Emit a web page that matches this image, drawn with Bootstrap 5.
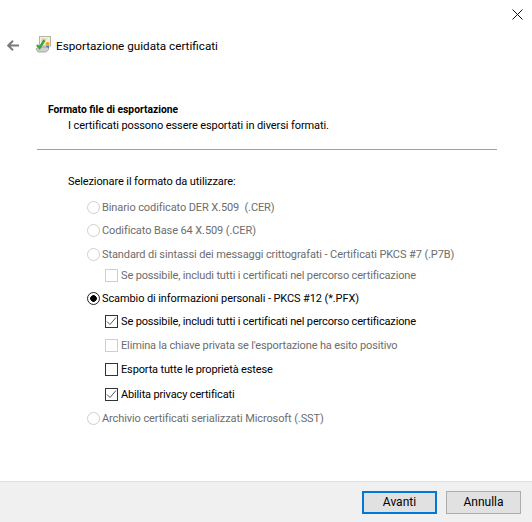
<!DOCTYPE html>
<html lang="it">
<head>
<meta charset="utf-8">
<title>Esportazione guidata certificati</title>
<link href="https://cdn.jsdelivr.net/npm/bootstrap@5.3.0/dist/css/bootstrap.min.css" rel="stylesheet">
<style>
html,body{height:100%;}
body{font-family:Roboto,"Liberation Sans",sans-serif;font-size:11px;letter-spacing:-.1px;color:#000;background:#fff;line-height:16px;overflow:hidden;}
.wiz{width:532px;height:522px;}
.closebar{height:37px;padding-right:9px;padding-top:9px;}
.headbar{height:16px;padding-left:7px;}
.backico{margin-right:16px;}
.certico{margin-right:5px;margin-top:-1px;}
.wiztitle{font-size:11.7px;letter-spacing:0;padding-top:1px;}
.content{padding-top:48px;}
.secttitle{padding-left:48px;padding-top:1px;font-weight:700;font-size:10.3px;letter-spacing:0;height:16px;}
.sectsub{padding-left:68px;padding-top:1px;height:16px;}
.rule{margin:16px 35px 0 37px;border:0;border-top:1px solid #a0a0a0;opacity:1;}
.prompt{padding-left:68px;padding-top:1px;margin-top:23px;height:16px;}
.optlist{margin-top:10px;}
.optrow{height:16px;margin:0;padding:0;min-height:0;display:flex;align-items:center;}
.lvl1{padding-left:87px;}
.lvl2{padding-left:105px;}
.g5{margin-top:5px;}.g7{margin-top:7px;}.g8{margin-top:8px;}.g9{margin-top:9px;}
.optrow .form-check-input{float:none;margin:0 2px 0 0;flex:none;border:1px solid #333;background-color:#fff;box-shadow:none;opacity:1;}
.optrow .form-check-input[type=radio]{width:13px;height:13px;border-radius:50%;background-image:none;}
.optrow .form-check-input[type=checkbox]{width:13px;height:13px;border-radius:0;margin-right:3px;}
.optrow .form-check-input[type=radio]:checked{background-color:#fff;border-color:#222;background-image:radial-gradient(circle at center,#000 0,#000 3px,transparent 3.6px);}
.optrow .form-check-input[type=checkbox]:checked{background-color:#fff;border-color:#333;background-image:url("data:image/svg+xml,%3csvg xmlns='http://www.w3.org/2000/svg' viewBox='0 0 11 11'%3e%3cpath fill='none' stroke='%23444' stroke-width='.9' d='M1 5.5l3 3 6-7'/%3e%3c/svg%3e");background-size:11px 11px;}
.optrow .form-check-input:disabled{border-color:#cfcfcf;}
.optrow .form-check-label{opacity:1;color:#000;white-space:nowrap;padding-top:2px;}
.optrow .form-check-input:disabled~.form-check-label{color:#6d6d6d;opacity:1;}
.lvl2 .form-check-label{letter-spacing:-.15px;}
.footbar{height:41px;background:#f0f0f0;border-top:1px solid #dfdfdf;padding:9px 11px 0 0;gap:9px;}
.wizbtn{width:75px;height:23px;padding:0;border-radius:0;font-size:12px;letter-spacing:0;line-height:17px;color:#000;background:#e1e1e1;border:1px solid #adadad;}
.wizbtn.isdefault{border:2px solid #0078d7;}
</style>
</head>
<body>
<div class="wiz d-flex flex-column">
  <div class="closebar d-flex justify-content-end">
    <svg width="11" height="11" viewBox="0 0 11 11"><path d="M.5.5l10 10M10.5.5l-10 10" stroke="#111" stroke-width="1" fill="none"/></svg>
  </div>
  <div class="headbar d-flex align-items-center">
    <svg class="backico" width="12" height="11" viewBox="0 0 12 11"><path d="M12 5.5H1.5M6 .8L1.2 5.5 6 10.2" stroke="#7a7a7a" stroke-width="1.9" fill="none"/></svg>
    <svg class="certico" width="16" height="17" viewBox="0 0 16 17">
      <rect x="4.5" y="0.5" width="11" height="9.5" fill="#f3f0dc" stroke="#b8b39a"/>
      <path d="M6 3h6M6 5h4" stroke="#cfcab0"/>
      <circle cx="12.5" cy="8" r="2" fill="#f0a41e"/>
      <rect x="11" y="10" width="3" height="2" fill="#3b7dd8"/>
      <path d="M1 13l3-2h8l2 2-3 3H3z" fill="#cfd2d0" stroke="#8d9190" stroke-width=".7"/>
      <path d="M2 9l2.6 3L9.5 4" stroke="#41a33a" stroke-width="2.4" fill="none"/>
    </svg>
    <span class="wiztitle">Esportazione guidata certificati</span>
  </div>
  <main class="content flex-grow-1">
    <div class="secttitle">Formato file di esportazione</div>
    <div class="sectsub">I certificati possono essere esportati in diversi formati.</div>
    <hr class="rule">
    <div class="prompt">Selezionare il formato da utilizzare:</div>
    <div class="optlist">
      <div class="form-check optrow lvl1"><input class="form-check-input" type="radio" name="fmt" id="r1" disabled><label class="form-check-label" for="r1">Binario codificato DER X.509 &nbsp;(.CER)</label></div>
      <div class="form-check optrow lvl1 g7"><input class="form-check-input" type="radio" name="fmt" id="r2" disabled><label class="form-check-label" for="r2">Codificato Base 64 X.509 (.CER)</label></div>
      <div class="form-check optrow lvl1 g8"><input class="form-check-input" type="radio" name="fmt" id="r3" disabled><label class="form-check-label" for="r3">Standard di sintassi dei messaggi crittografati - Certificati PKCS #7 (.P7B)</label></div>
      <div class="form-check optrow lvl2 g5"><input class="form-check-input" type="checkbox" id="c1" disabled><label class="form-check-label" for="c1">Se possibile, includi tutti i certificati nel percorso certificazione</label></div>
      <div class="form-check optrow lvl1 g7"><input class="form-check-input" type="radio" name="fmt" id="r4" checked><label class="form-check-label" for="r4">Scambio di informazioni personali - PKCS #12 (*.PFX)</label></div>
      <div class="form-check optrow lvl2 g7"><input class="form-check-input" type="checkbox" id="c2" checked><label class="form-check-label" for="c2">Se possibile, includi tutti i certificati nel percorso certificazione</label></div>
      <div class="form-check optrow lvl2 g8"><input class="form-check-input" type="checkbox" id="c3" disabled><label class="form-check-label" for="c3">Elimina la chiave privata se l'esportazione ha esito positivo</label></div>
      <div class="form-check optrow lvl2 g8"><input class="form-check-input" type="checkbox" id="c4"><label class="form-check-label" for="c4">Esporta tutte le proprietà estese</label></div>
      <div class="form-check optrow lvl2 g9"><input class="form-check-input" type="checkbox" id="c5" checked><label class="form-check-label" for="c5">Abilita privacy certificati</label></div>
      <div class="form-check optrow lvl1 g8"><input class="form-check-input" type="radio" name="fmt" id="r5" disabled><label class="form-check-label" for="r5">Archivio certificati serializzati Microsoft (.SST)</label></div>
    </div>
  </main>
  <footer class="footbar d-flex justify-content-end align-items-start">
    <button type="button" class="btn wizbtn isdefault">Avanti</button>
    <button type="button" class="btn wizbtn">Annulla</button>
  </footer>
</div>
<script src="https://cdn.jsdelivr.net/npm/bootstrap@5.3.0/dist/js/bootstrap.bundle.min.js"></script>
</body>
</html>
